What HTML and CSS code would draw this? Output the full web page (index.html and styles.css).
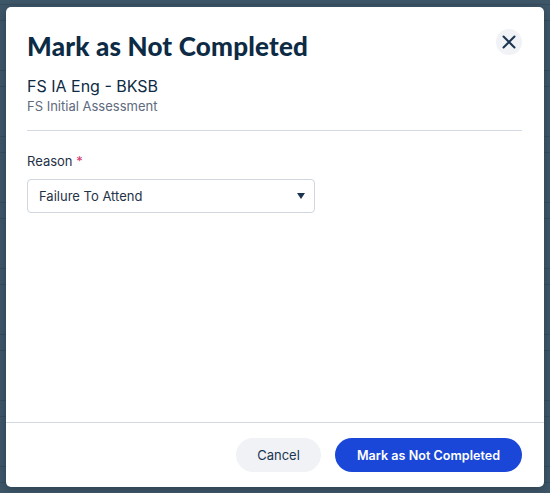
FILE: index.html
```html
<!DOCTYPE html>
<html lang="en">
<head>
<meta charset="utf-8">
<title>Mark as Not Completed</title>
<link rel="stylesheet" href="styles.css">
</head>
<body>
<div class="backdrop">
  <div class="modal" role="dialog" aria-labelledby="modal-title">
    <div class="modal-body">
      <div class="modal-head">
        <h1 id="modal-title" class="modal-title">Mark as Not Completed</h1>
        <button class="close-btn" aria-label="Close">
          <svg width="14" height="14" viewBox="0 0 14 14" aria-hidden="true">
            <path d="M1.5 1.5 L12.5 12.5 M12.5 1.5 L1.5 12.5" stroke="#1b3550" stroke-width="2" stroke-linecap="round" fill="none"/>
          </svg>
        </button>
      </div>
      <div class="item-name">FS IA Eng - BKSB</div>
      <div class="item-type">FS Initial Assessment</div>
      <hr class="divider">
      <label class="field-label" for="reason">Reason <span class="req">*</span></label>
      <div class="select">
        <span class="select-value" id="reason">Failure To Attend</span>
        <svg class="select-caret" width="8" height="6" viewBox="0 0 8 6" aria-hidden="true">
          <path d="M0 0 H8 L4 6 Z" fill="#1b3550"/>
        </svg>
      </div>
    </div>
    <div class="modal-foot">
      <button class="btn btn-secondary">Cancel</button>
      <button class="btn btn-primary">Mark as Not Completed</button>
    </div>
  </div>
</div>
</body>
</html>
```

FILE: styles.css
```css
* { box-sizing: border-box; }

html, body {
  margin: 0;
  padding: 0;
  height: 100%;
}

body {
  font-family: Inter, "Noto Sans", sans-serif;
  color: #1b3550;
}

/* dimmed page behind the dialog, with the faint table rows showing through */
.backdrop {
  height: 493px;
  background-color: #3d5668;
  background-image:
    linear-gradient(to bottom, rgba(20, 35, 48, 0.18) 1px, transparent 1px),
    linear-gradient(to bottom, rgba(20, 35, 48, 0.18) 1px, transparent 1px);
  background-size: 100% 66px, 100% 66px;
  background-position: 0 4px, 0 20px;
  padding: 7px 6px 6px 6px;
}

.modal {
  width: 538px;
  height: 480px;
  background: #ffffff;
  border-radius: 5px;
  display: flex;
  flex-direction: column;
  box-shadow: 0 2px 8px rgba(0, 0, 0, 0.25);
}

.modal-body {
  flex: 1;
  padding: 23px 22px 0 21px;
}

.modal-head {
  display: flex;
  justify-content: space-between;
  align-items: flex-start;
}

.modal-title {
  margin: 0;
  font-family: Lato, "Noto Sans", sans-serif;
  font-weight: 900;
  font-size: 26px;
  line-height: 32px;
  color: #0d2b45;
  letter-spacing: 0.2px;
}

.close-btn {
  width: 26px;
  height: 26px;
  margin-top: -1px;
  border: none;
  border-radius: 50%;
  background: #f0f2f6;
  display: flex;
  align-items: center;
  justify-content: center;
  padding: 0;
}

.item-name {
  margin-top: 14px;
  font-size: 16px;
  line-height: 20px;
  color: #0d2b45;
}

.item-type {
  margin-top: 1px;
  font-size: 13px;
  line-height: 18px;
  color: #5e6a7d;
}

.divider {
  border: none;
  border-top: 1px solid #d3d9e3;
  margin: 15px 0 0 0;
}

.field-label {
  display: block;
  margin-top: 21px;
  font-size: 13px;
  line-height: 18px;
  color: #1f3247;
}

.req { color: #d6336c; }

.select {
  margin-top: 9px;
  width: 288px;
  height: 34px;
  border: 1px solid #cfd6e0;
  border-radius: 4px;
  display: flex;
  align-items: center;
  justify-content: space-between;
  padding: 0 9px 0 11px;
}

.select-value {
  font-size: 13px;
  color: #1f3247;
}

.modal-foot {
  border-top: 1px solid #d3d9e3;
  height: 65px;
  display: flex;
  justify-content: flex-end;
  align-items: center;
  gap: 14px;
  padding: 0 22px 0 0;
}

.btn {
  height: 34px;
  border: none;
  border-radius: 17px;
  font-family: Inter, "Noto Sans", sans-serif;
  font-size: 13px;
  padding: 0 10px;
  white-space: nowrap;
}

.btn-secondary {
  width: 85px;
  background: #f0f2f6;
  color: #1b3550;
}

.btn-primary {
  width: 187px;
  background: #1a47d8;
  color: #ffffff;
  font-weight: 600;
  font-size: 12.6px;
}
```
